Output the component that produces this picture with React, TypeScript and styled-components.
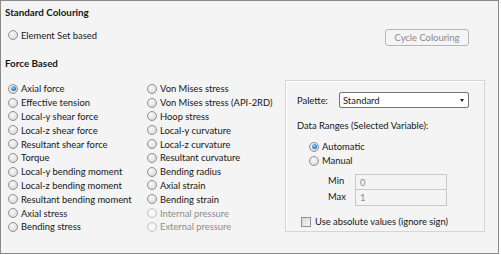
import React from "react";
import styled, { createGlobalStyle } from "styled-components";

const GlobalStyle = createGlobalStyle`
  html, body {
    margin: 0;
    padding: 0;
    background: #ffffff;
  }
  body {
    font-family: Lato, "Segoe UI", "Noto Sans", sans-serif;
    font-size: 9.4px;
    color: #161616;
  }
`;

const Frame = styled.div`
  width: 493px;
  height: 252px;
  border: 1px solid #8a8a8a;
  background: #f4f4f4;
  padding: 0 0 0 4px;
`;

const Heading = styled.div<{ $top: number }>`
  font-weight: bold;
  font-size: 9.8px;
  height: 16px;
  line-height: 16px;
  margin-top: ${(p) => p.$top}px;
`;

const TopRow = styled.div`
  display: flex;
  align-items: flex-start;
  margin-top: 7px;
  padding-left: 3px;
`;

const CycleButton = styled.button`
  margin: 2px 29px 0 auto;
  height: 17px;
  width: 84px;
  padding: 0;
  border: 1px solid #b4b8ba;
  border-radius: 3px;
  background: #f4f4f4;
  color: #8a8a8a;
  font: inherit;
  line-height: 14px;
`;

const Body = styled.div`
  display: flex;
  align-items: flex-start;
  margin-top: 11px;
  padding-left: 3px;
`;

const Column = styled.div<{ $width: number }>`
  display: flex;
  flex-direction: column;
  width: ${(p) => p.$width}px;
`;

const Option = styled.label<{ $disabled?: boolean; $height?: number }>`
  display: flex;
  align-items: center;
  height: ${(p) => p.$height ?? 13.8}px;
  white-space: nowrap;
  color: ${(p) => (p.$disabled ? "#8d8d8d" : "#161616")};
`;

const Radio = styled.span<{ $checked?: boolean; $disabled?: boolean }>`
  position: relative;
  display: inline-block;
  width: 10px;
  height: 10px;
  margin-right: 3px;
  border-radius: 50%;
  box-sizing: border-box;
  border: 1px solid ${(p) => (p.$disabled ? "#c2c2c2" : "#909090")};
  background: ${(p) =>
    p.$disabled
      ? "#f6f6f6"
      : "radial-gradient(circle at 40% 35%, #fafafa 0%, #e4e4e4 55%, #cbcbcb 100%)"};
  flex: none;
  &::after {
    content: "";
    display: ${(p) => (p.$checked ? "block" : "none")};
    position: absolute;
    left: 1.5px;
    top: 1.5px;
    width: 5px;
    height: 5px;
    border-radius: 50%;
    background: radial-gradient(circle at 40% 35%, #9ad6fb 0%, #2f83d3 55%, #1b4f8e 100%);
  }
`;

const Group = styled.div`
  margin-left: 1px;
  width: 200px;
  height: 152px;
  box-sizing: border-box;
  border: 1px solid #d5d5d5;
  box-shadow: inset 1px 1px 0 #ffffff;
  padding: 11px 0 0 11px;
  margin-top: -2px;
`;

const PaletteRow = styled.div`
  display: flex;
  align-items: center;
  height: 16px;
`;

const PaletteLabel = styled.span`
  width: 42px;
`;

const Select = styled.div`
  display: flex;
  align-items: center;
  justify-content: space-between;
  width: 130px;
  height: 16px;
  box-sizing: border-box;
  border: 1px solid #747474;
  border-radius: 2px;
  background: #ffffff;
  padding: 0 4px 0 3px;
`;

const Arrow = styled.span`
  width: 0;
  height: 0;
  border-left: 2.5px solid transparent;
  border-right: 2.5px solid transparent;
  border-top: 3px solid #1e1e1e;
`;

const Caption = styled.div`
  margin-top: 11px;
  height: 14px;
  line-height: 14px;
`;

const RangeList = styled.div`
  display: flex;
  flex-direction: column;
  margin: 7px 0 0 12px;
`;

const LimitGrid = styled.div`
  display: grid;
  grid-template-columns: 27px 92px;
  margin: 6px 0 0 31px;
`;

const LimitLabel = styled.span`
  height: 15px;
  line-height: 14px;
`;

const LimitInput = styled.div<{ $first?: boolean }>`
  height: 16px;
  box-sizing: border-box;
  border: 1px solid #c8c8c8;
  border-top: ${(p) => (p.$first ? "1px solid #c8c8c8" : "none")};
  background: #f4f4f4;
  color: #8d8d8d;
  padding: 2px 0 0 4px;
  line-height: 12px;
`;

const CheckRow = styled.label`
  display: flex;
  align-items: center;
  margin: 10px 0 0 4px;
  height: 12px;
  white-space: nowrap;
`;

const Check = styled.span`
  width: 10px;
  height: 10px;
  box-sizing: border-box;
  border: 1px solid #909090;
  background: linear-gradient(135deg, #d8d8d8, #f7f7f7);
  margin-right: 4px;
  flex: none;
`;

const leftItems = [
  "Axial force",
  "Effective tension",
  "Local-y shear force",
  "Local-z shear force",
  "Resultant shear force",
  "Torque",
  "Local-y bending moment",
  "Local-z bending moment",
  "Resultant bending moment",
  "Axial stress",
  "Bending stress",
];

const midItems: { label: string; disabled?: boolean }[] = [
  { label: "Von Mises stress" },
  { label: "Von Mises stress (API-2RD)" },
  { label: "Hoop stress" },
  { label: "Local-y curvature" },
  { label: "Local-z curvature" },
  { label: "Resultant curvature" },
  { label: "Bending radius" },
  { label: "Axial strain" },
  { label: "Bending strain" },
  { label: "Internal pressure", disabled: true },
  { label: "External pressure", disabled: true },
];

export default function App() {
  return (
    <>
      <GlobalStyle />
      <Frame>
        <Heading $top={3}>Standard Colouring</Heading>
        <TopRow>
          <Option $height={16}>
            <Radio />
            Element Set based
          </Option>
          <CycleButton disabled>Cycle Colouring</CycleButton>
        </TopRow>
        <Heading $top={9}>Force Based</Heading>
        <Body>
          <Column $width={139}>
            {leftItems.map((t, i) => (
              <Option key={t}>
                <Radio $checked={i === 0} />
                {t}
              </Option>
            ))}
          </Column>
          <Column $width={137}>
            {midItems.map((t) => (
              <Option key={t.label} $disabled={t.disabled}>
                <Radio $disabled={t.disabled} />
                {t.label}
              </Option>
            ))}
          </Column>
          <Group>
            <PaletteRow>
              <PaletteLabel>Palette:</PaletteLabel>
              <Select>
                Standard
                <Arrow />
              </Select>
            </PaletteRow>
            <Caption>Data Ranges (Selected Variable):</Caption>
            <RangeList>
              <Option>
                <Radio $checked />
                Automatic
              </Option>
              <Option>
                <Radio />
                Manual
              </Option>
            </RangeList>
            <LimitGrid>
              <LimitLabel>Min</LimitLabel>
              <LimitInput $first>0</LimitInput>
              <LimitLabel>Max</LimitLabel>
              <LimitInput>1</LimitInput>
            </LimitGrid>
            <CheckRow>
              <Check />
              Use absolute values (ignore sign)
            </CheckRow>
          </Group>
        </Body>
      </Frame>
    </>
  );
}
